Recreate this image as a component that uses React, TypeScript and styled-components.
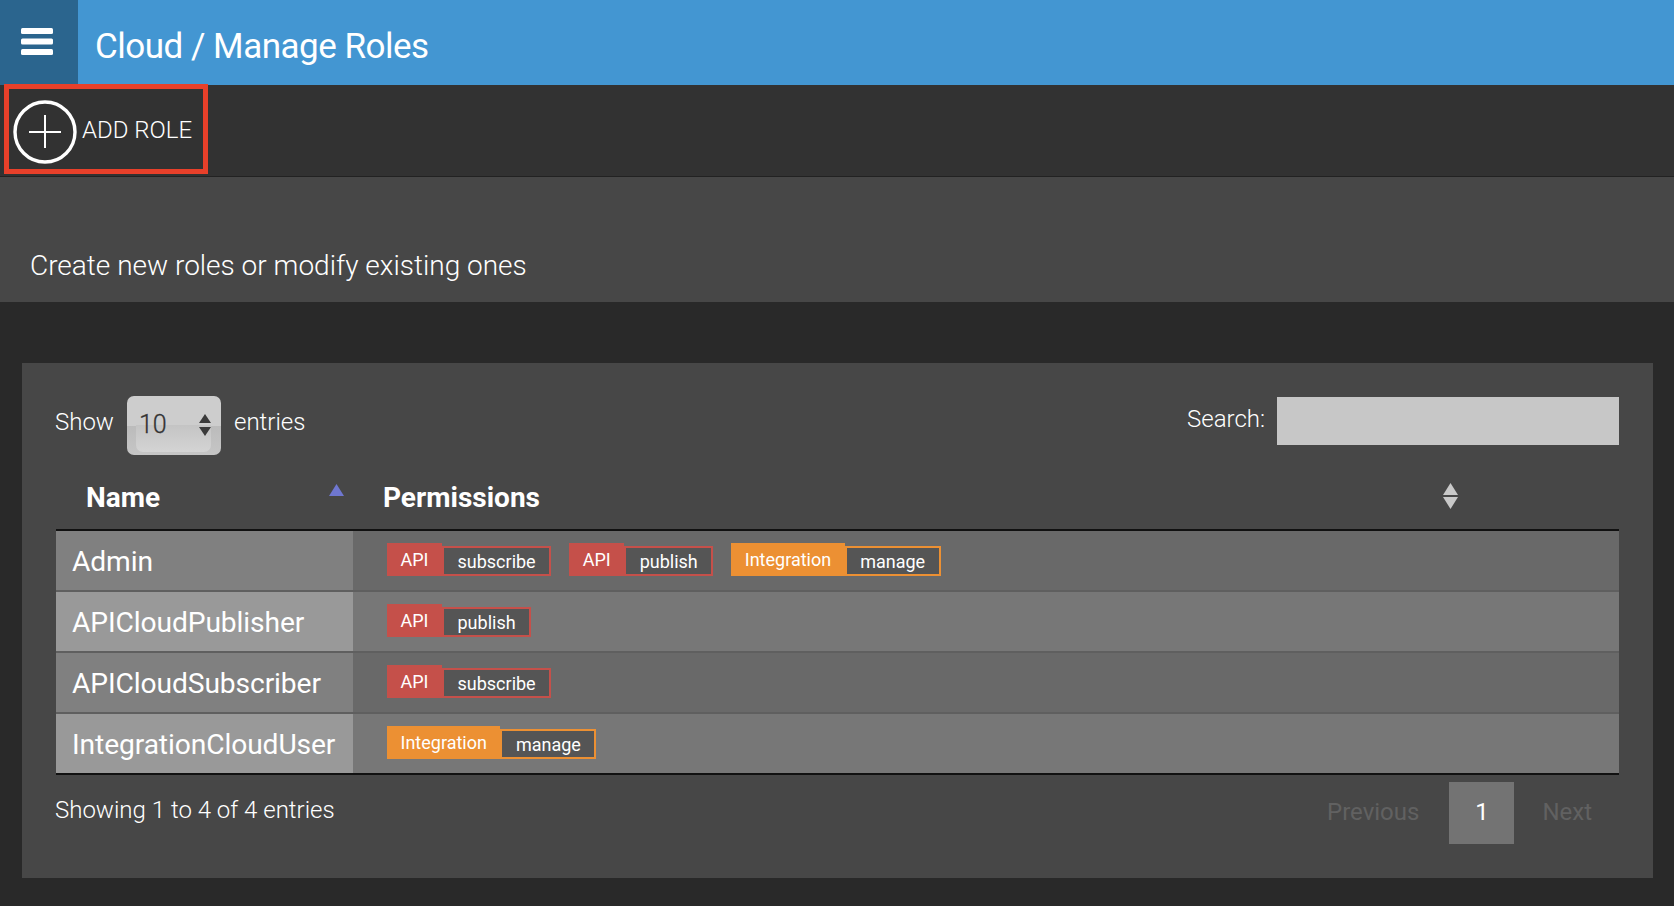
import React from "react";
import styled, { createGlobalStyle } from "styled-components";

const Global = createGlobalStyle`
  html, body { margin: 0; padding: 0; height: 100%; background: #292929; overflow: hidden; }
  body { font-family: Roboto, "Liberation Sans", sans-serif; color: #fff; }
  * { box-sizing: border-box; }
`;

const Page = styled.div`
  position: relative;
  width: 1674px;
  height: 906px;
  overflow: hidden;
`;
const Header = styled.header`
  display: flex;
  align-items: center;
  height: 85px;
  background: #4396d2;
`;
const MenuBox = styled.div`
  width: 78px;
  height: 100%;
  background: #2b658e;
  display: flex;
  align-items: center;
  justify-content: flex-start;
  padding: 0 0 2px 21px;
`;
const Title = styled.h1`
  margin: 0 0 0 17px;
  font-size: 35px;
  font-weight: 400;
  letter-spacing: -0.5px;
  position: relative;
  top: 4px;
`;
const Toolbar = styled.div`
  height: 92px;
  background: #323232;
  border-bottom: 1px solid #222;
  display: flex;
  align-items: center;
`;
const AddButton = styled.div`
  display: flex;
  align-items: center;
  gap: 5px;
  margin: 0 0 0 13px;
  font-size: 24px;
  font-weight: 300;
  position: relative;
  z-index: 1;
`;
const PlusIcon = styled.svg`
  position: relative;
  top: 1px;
`;
const ButtonLabel = styled.span`
  position: relative;
  top: -1px;
`;
const Highlight = styled.div`
  position: absolute;
  left: 4px;
  top: 84px;
  width: 204px;
  height: 90px;
  border: 5px solid #e8402a;
  pointer-events: none;
`;
const Intro = styled.div`
  height: 125px;
  background: #474747;
  padding: 71px 0 0 30px;
  font-size: 28px;
  font-weight: 300;
  line-height: 36px;
`;
const Main = styled.main`
  padding: 61px 21px 28px 22px;
`;
const Card = styled.section`
  height: 515px;
  background: #474747;
  padding: 33px 34px 0 34px;
`;
const Controls = styled.div`
  display: flex;
  justify-content: space-between;
  height: 75px;
`;
const Length = styled.div`
  display: flex;
  align-items: flex-start;
  align-self: flex-start;
  height: 59px;
  margin-left: -1px;
  gap: 13px;
  font-size: 24px;
  font-weight: 300;
  line-height: 52px;
`;
const SelectBox = styled.div`
  position: relative;
  width: 94px;
  height: 59px;
  border-radius: 7px;
  background: linear-gradient(#cdcdcd 0 50%, #bbb 50%, #c6c6c6 100%);
  color: #333;
  font-size: 25px;
  font-weight: 300;
  line-height: 30px;
  padding: 14px 0 0 12px;
  &::before {
    content: "";
    position: absolute;
    left: 9px;
    right: 10px;
    top: 29px;
    bottom: 3px;
    border-radius: 0 0 7px 7px;
    background: linear-gradient(#c4c4c4, #d4d4d4);
  }
`;
const SelectValue = styled.span`
  position: relative;
  -webkit-text-stroke: 0.3px #333;
`;
const SelectArrows = styled.svg`
  position: absolute;
  right: 10px;
  top: 18px;
`;
const SearchWrap = styled.div`
  display: flex;
  align-items: center;
  align-self: flex-start;
  gap: 12px;
  margin-top: 1px;
  font-size: 24px;
  font-weight: 300;
`;
const SearchLabel = styled.span`
  position: relative;
  top: -2px;
`;
const SearchInput = styled.div`
  width: 342px;
  height: 48px;
  background: #c7c7c7;
`;
const Table = styled.table`
  width: 100%;
  border-collapse: collapse;
  table-layout: fixed;
  border-bottom: 2px solid #111;
`;
const HeadCell = styled.th<{ $w?: number; $pl: number }>`
  position: relative;
  height: 59px;
  width: ${(p) => (p.$w ? p.$w + "px" : "auto")};
  padding: 0 0 6px ${(p) => p.$pl}px;
  text-align: left;
  font-size: 28px;
  font-weight: 700;
  border-bottom: 2px solid #111;
`;
const SortIcon = styled.svg<{ $left: number; $top: number }>`
  position: absolute;
  left: ${(p) => p.$left}px;
  top: ${(p) => p.$top}px;
`;
const Row = styled.tr`
  height: 61px;
  & + & td { border-top: 2px solid #5f5f5f; }
`;
const NameCell = styled.td<{ $even: boolean }>`
  padding: 2px 0 0 16px;
  background: ${(p) => (p.$even ? "#999" : "#808080")};
  font-size: 28.2px;
  font-weight: 400;
  letter-spacing: -0.1px;
`;
const PermCell = styled.td<{ $even: boolean }>`
  padding: 0 0 2px 34px;
  background: ${(p) => (p.$even ? "#777" : "#696969")};
`;
const Perms = styled.div`
  display: flex;
  gap: 18px;
`;
const Perm = styled.div`
  display: flex;
  align-items: flex-end;
`;
const Scope = styled.div<{ $color: string }>`
  height: 33px;
  padding: 0 13.5px;
  background: ${(p) => p.$color};
  font-size: 18px;
  line-height: 34px;
`;
const Action = styled.div<{ $color: string }>`
  height: 30px;
  padding: 0 13.5px;
  background: #555;
  border: 2px solid ${(p) => p.$color};
  font-size: 18px;
  line-height: 27px;
`;
const Footer = styled.div`
  display: flex;
  justify-content: space-between;
  margin-top: 7px;
`;
const Info = styled.div`
  margin-left: -1px;
  font-size: 24px;
  font-weight: 300;
  padding-top: 14px;
`;
const Pager = styled.div`
  display: flex;
  align-items: flex-start;
  height: 62px;
  padding-right: 27px;
  font-size: 24px;
  line-height: 60px;
  color: #616161;
`;
const PageNumber = styled.div`
  width: 65px;
  height: 62px;
  margin: 0 28px 0 30px;
  background: #737373;
  color: #fff;
  text-align: center;
`;

const RED = "#c5504a";
const ORANGE = "#ec9033";
const roles = [
  { name: "Admin", perms: [["API", "subscribe"], ["API", "publish"], ["Integration", "manage"]] },
  { name: "APICloudPublisher", perms: [["API", "publish"]] },
  { name: "APICloudSubscriber", perms: [["API", "subscribe"]] },
  { name: "IntegrationCloudUser", perms: [["Integration", "manage"]] },
];

export default function App() {
  return (
    <Page>
      <Global />
      <Header>
        <MenuBox>
          <svg width="32" height="27" viewBox="0 0 32 27" fill="#fff">
            <rect x="0" y="0" width="32" height="6" rx="1.5" />
            <rect x="0" y="10.5" width="32" height="6" rx="1.5" />
            <rect x="0" y="21" width="32" height="6" rx="1.5" />
          </svg>
        </MenuBox>
        <Title>Cloud / Manage Roles</Title>
      </Header>
      <Toolbar>
        <AddButton>
          <PlusIcon width="64" height="64" viewBox="0 0 64 64" fill="none" stroke="#fff">
            <circle cx="32" cy="32" r="30" strokeWidth="3.4" />
            <path d="M32 15V48M16 32H48" strokeWidth="2" />
          </PlusIcon>
          <ButtonLabel>ADD ROLE</ButtonLabel>
        </AddButton>
      </Toolbar>
      <Highlight />
      <Intro>Create new roles or modify existing ones</Intro>
      <Main>
        <Card>
          <Controls>
            <Length>
              Show
              <SelectBox>
                <SelectValue>10</SelectValue>
                <SelectArrows width="12" height="22" viewBox="0 0 12 22" fill="#3a3a3a">
                  <path d="M6 0L12 9H0Z" />
                  <path d="M0 13H12L6 22Z" />
                </SelectArrows>
              </SelectBox>
              entries
            </Length>
            <SearchWrap>
              <SearchLabel>Search:</SearchLabel>
              <SearchInput />
            </SearchWrap>
          </Controls>
          <Table>
            <thead>
              <tr>
                <HeadCell $w={297} $pl={30}>
                  Name
                  <SortIcon $left={273} $top={13} width="15" height="12" viewBox="0 0 15 12" fill="#6f77d0">
                    <path d="M7.5 0L15 12H0Z" />
                  </SortIcon>
                </HeadCell>
                <HeadCell $pl={30}>
                  Permissions
                  <SortIcon $left={1090} $top={12} width="15" height="26" viewBox="0 0 15 26" fill="#c9c9c9">
                    <path d="M7.5 0L15 12H0Z" />
                    <path d="M0 14H15L7.5 26Z" />
                  </SortIcon>
                </HeadCell>
              </tr>
            </thead>
            <tbody>
              {roles.map((r, i) => (
                <Row key={r.name}>
                  <NameCell $even={i % 2 === 1}>{r.name}</NameCell>
                  <PermCell $even={i % 2 === 1}>
                    <Perms>
                      {r.perms.map(([scope, action]) => {
                        const c = scope === "API" ? RED : ORANGE;
                        return (
                          <Perm key={scope + action}>
                            <Scope $color={c}>{scope}</Scope>
                            <Action $color={c}>{action}</Action>
                          </Perm>
                        );
                      })}
                    </Perms>
                  </PermCell>
                </Row>
              ))}
            </tbody>
          </Table>
          <Footer>
            <Info>Showing 1 to 4 of 4 entries</Info>
            <Pager>
              Previous
              <PageNumber>1</PageNumber>
              Next
            </Pager>
          </Footer>
        </Card>
      </Main>
    </Page>
  );
}
